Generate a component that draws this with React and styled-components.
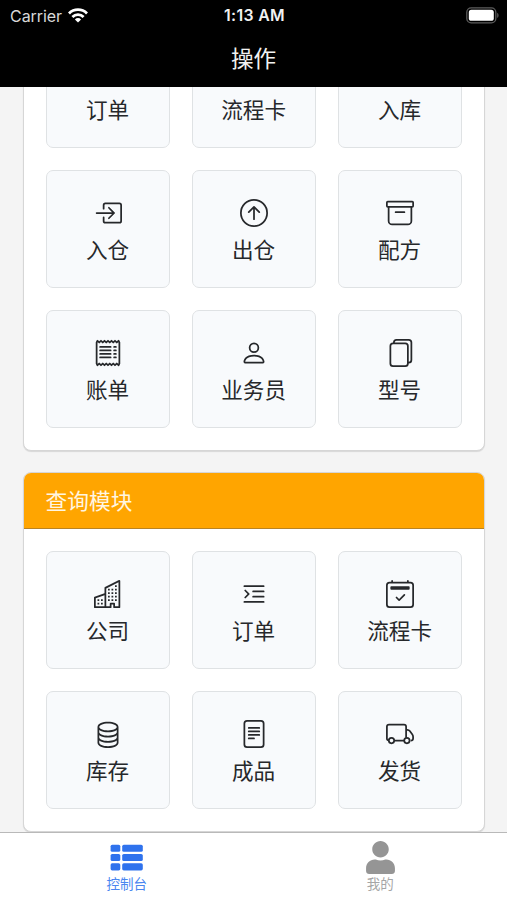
import React from "react";
import styled, { createGlobalStyle } from "styled-components";
import {
  BsArchive,
  BsArrowUpCircle,
  BsBoxArrowInDown,
  BsBoxArrowInRight,
  BsBuildings,
  BsCalendar2Check,
  BsDatabase,
  BsFiles,
  BsFileText,
  BsPerson,
  BsReceipt,
  BsTextIndentLeft,
} from "react-icons/bs";
import { FaUser } from "react-icons/fa";

const GlobalStyle = createGlobalStyle`
  * {
    box-sizing: border-box;
  }

  body {
    margin: 0;
    font-family: "Inter", "Noto Sans CJK SC", sans-serif;
  }
`;

const Screen = styled.div`
  display: flex;
  flex-direction: column;
  width: 507px;
  height: 900px;
  overflow: hidden;
  background-color: #f4f4f4;
`;

const Header = styled.header`
  flex: none;
  height: 87px;
  background-color: #000;
  color: #f2f2f2;
`;

const StatusBar = styled.div`
  display: grid;
  grid-template-columns: 1fr auto 1fr;
  align-items: center;
  height: 30px;
  padding: 0 8px 0 10px;
  font-size: 16px;
  line-height: 30px;
`;

const Carrier = styled.div`
  display: flex;
  align-items: center;
  gap: 6px;
  color: #d8d8d8;
  letter-spacing: -0.05px;
`;

const Clock = styled.div`
  padding-top: 1px;
  font-size: 15.8px;
  font-weight: 600;
  letter-spacing: 0.35px;
`;

const Battery = styled.div`
  display: flex;
  justify-content: flex-end;
`;

const Title = styled.h1`
  margin: 0;
  font-size: 22.6px;
  font-weight: 400;
  line-height: 57px;
  text-align: center;
`;

const Content = styled.main`
  flex: 1;
  min-height: 0;
  display: flex;
  flex-direction: column;
  justify-content: flex-end;
  gap: 21.4px;
  padding: 0 22.4px 0 22.6px;
  overflow: hidden;
`;

const Panel = styled.section`
  flex: none;
  border: 1px solid #d6d6d6;
  border-radius: 8px;
  background-color: #fff;
  box-shadow: 0 1px 1px rgba(0, 0, 0, 0.12);
  overflow: hidden;
`;

const PanelHeader = styled.div`
  height: 55.6px;
  padding-left: 22px;
  border-bottom: 1px solid #b98322;
  background-color: #ffa500;
  color: #fff6e2;
  font-size: 21.7px;
  line-height: 57px;
`;

const Grid = styled.div`
  display: grid;
  grid-template-columns: repeat(3, 124px);
  gap: 21.8px 22px;
  padding: 21.6px 22px;
`;

const Tile = styled.div`
  display: flex;
  flex-direction: column;
  align-items: center;
  height: 118.5px;
  padding-top: 28px;
  border: 1px solid #dfe2e4;
  border-radius: 7px;
  background-color: #f8fafc;
  color: #26282b;

  svg {
    flex: none;
    width: 28px;
    height: 28px;
  }

  span {
    margin-top: 7.2px;
    font-size: 21.6px;
    line-height: 32px;
  }
`;

const TabBar = styled.nav`
  flex: none;
  display: flex;
  height: 68px;
  border-top: 1px solid #b9b9b9;
  background-color: #fff;
`;

const Tab = styled.div`
  flex: 1;
  display: flex;
  flex-direction: column;
  align-items: center;
  padding-top: 8px;
  color: ${(props) => (props.$active ? "#2f72ed" : "#959595")};

  svg {
    flex: none;
    width: 33px;
    height: 33px;
  }

  span {
    margin-top: 1px;
    font-size: 13.5px;
    line-height: 18px;
    color: ${(props) => (props.$active ? "#4a86f0" : "#a6a6a6")};
  }
`;

const WifiIcon = () => (
  <svg width="20" height="15" viewBox="0 0 20 15">
    <g fill="none" stroke="#fff" strokeWidth="2.8">
      <path d="M1 5.4a12.8 12.8 0 0 1 18 0" />
      <path d="M4.4 9a7.9 7.9 0 0 1 11.2 0" />
    </g>
    <path d="M10 14.6 6.9 11.4a4.4 4.4 0 0 1 6.2 0z" fill="#fff" />
  </svg>
);

const BatteryIcon = () => (
  <svg width="33" height="17" viewBox="0 0 33 17">
    <rect x="0.8" y="0.8" width="29" height="15" rx="4.4" fill="none" stroke="#5c5c5c" strokeWidth="1.3" />
    <rect x="2.8" y="2.8" width="25" height="11" rx="2.6" fill="#fff" />
    <path d="M31.2 5.8c1.8.8 1.8 4.4 0 5.2z" fill="#5c5c5c" />
  </svg>
);

const TruckIcon = () => (
  <svg viewBox="0 0 28 28" fill="none" stroke="currentColor" strokeWidth="1.75">
    <path d="M2.8 20.4C1.6 20.4.9 19.6.9 18.4V6.6c0-1.3.8-2.1 2.1-2.1h15c1.3 0 2.1.8 2.1 2.1v11.2M8.3 20.6h9.9" />
    <path d="M20.1 9.8h1.2c1 0 1.9.4 2.5 1.2l2.4 3.2c.6.8.9 1.6.9 2.5v1.7c0 1.2-.8 2.1-2.4 2.1" />
    <circle cx="5.5" cy="20.6" r="2.7" />
    <circle cx="20.9" cy="20.6" r="2.7" />
  </svg>
);

const ListIcon = () => (
  <svg viewBox="0 0 33 33" fill="currentColor">
    {[3.7, 13, 22.3].map((y) => (
      <g key={y}>
        <rect x="0.6" y={y} width="9.7" height="7.1" rx="1.6" />
        <rect x="12.2" y={y} width="20.6" height="7.1" rx="1.6" />
      </g>
    ))}
  </svg>
);

const operations = [
  { label: "订单", Icon: BsTextIndentLeft },
  { label: "流程卡", Icon: BsCalendar2Check },
  { label: "入库", Icon: BsBoxArrowInDown },
  { label: "入仓", Icon: BsBoxArrowInRight },
  { label: "出仓", Icon: BsArrowUpCircle },
  { label: "配方", Icon: BsArchive },
  { label: "账单", Icon: BsReceipt },
  { label: "业务员", Icon: BsPerson },
  { label: "型号", Icon: BsFiles },
];

const queries = [
  { label: "公司", Icon: BsBuildings },
  { label: "订单", Icon: BsTextIndentLeft },
  { label: "流程卡", Icon: BsCalendar2Check },
  { label: "库存", Icon: BsDatabase },
  { label: "成品", Icon: BsFileText },
  { label: "发货", Icon: TruckIcon },
];

const Module = ({ title, items }) => (
  <Panel>
    {title && <PanelHeader>{title}</PanelHeader>}
    <Grid>
      {items.map(({ label, Icon }) => (
        <Tile key={label}>
          <Icon />
          <span>{label}</span>
        </Tile>
      ))}
    </Grid>
  </Panel>
);

export default function App() {
  return (
    <>
      <GlobalStyle />
      <Screen>
        <Header>
          <StatusBar>
            <Carrier>
              Carrier
              <WifiIcon />
            </Carrier>
            <Clock>1:13 AM</Clock>
            <Battery>
              <BatteryIcon />
            </Battery>
          </StatusBar>
          <Title>操作</Title>
        </Header>
        <Content>
          <Module items={operations} />
          <Module title="查询模块" items={queries} />
        </Content>
        <TabBar>
          <Tab $active>
            <ListIcon />
            <span>控制台</span>
          </Tab>
          <Tab>
            <FaUser />
            <span>我的</span>
          </Tab>
        </TabBar>
      </Screen>
    </>
  );
}
